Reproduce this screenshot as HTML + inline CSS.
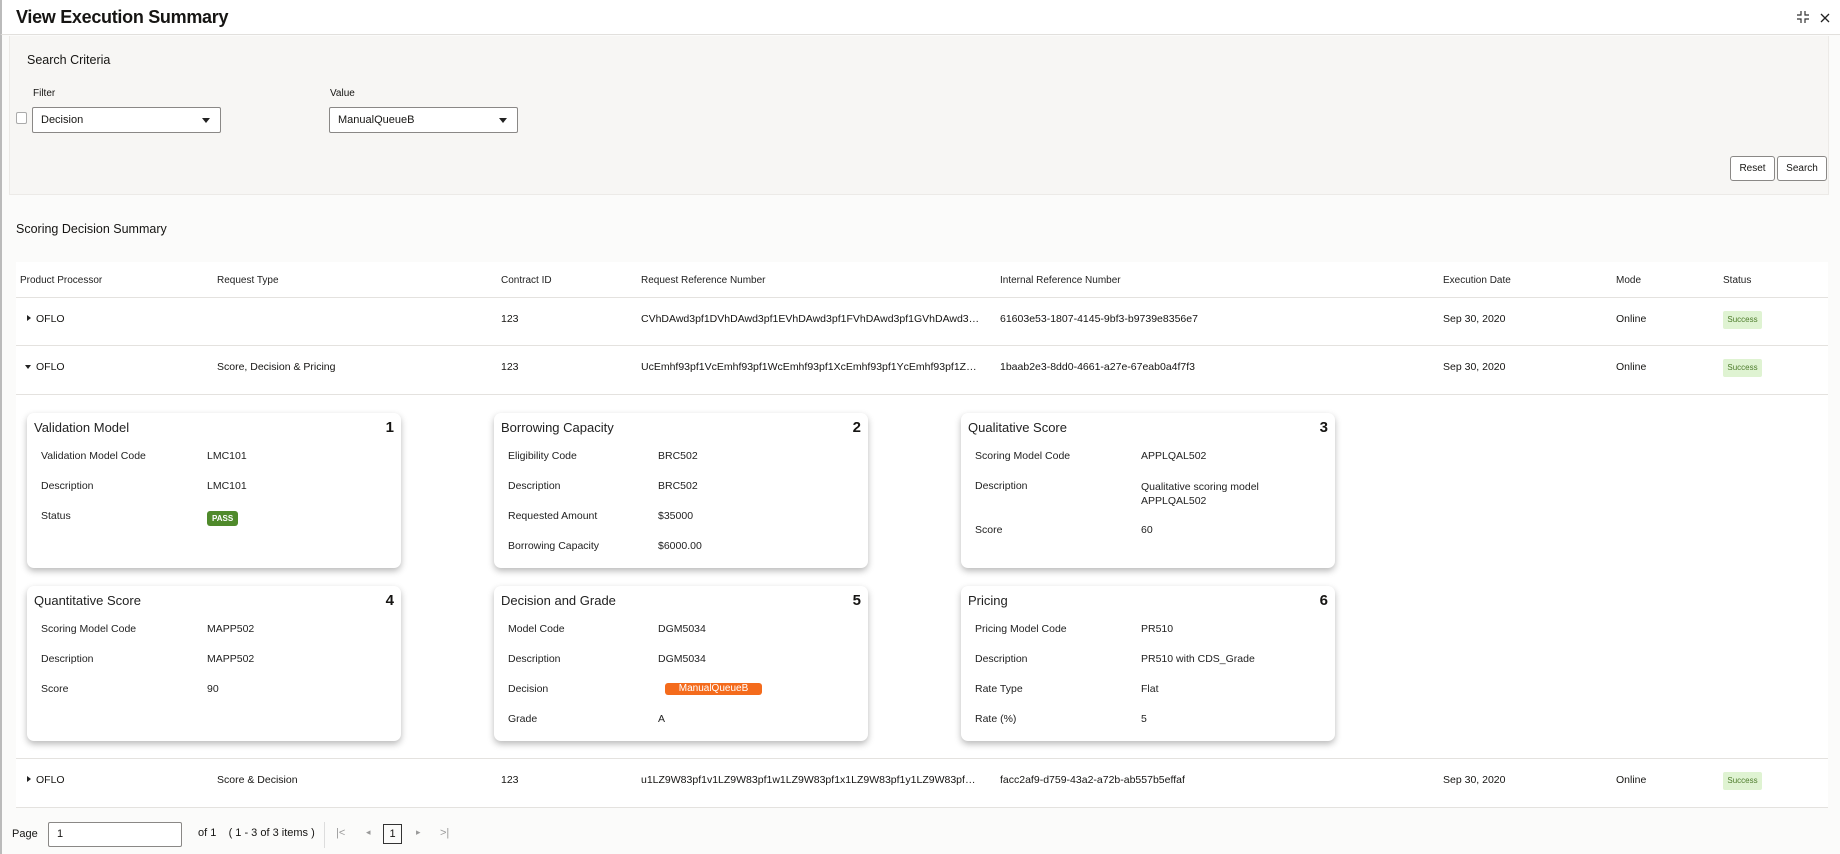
<!DOCTYPE html>
<html><head><meta charset="utf-8"><style>
*{margin:0;padding:0;box-sizing:border-box}
body{width:1840px;height:854px;overflow:hidden;background:#fff;font-family:"Liberation Sans",sans-serif;color:#161513;position:relative;font-size:11px}
.a{position:absolute;white-space:nowrap}
.hdr{left:0;top:0;width:1840px;height:35px;border-bottom:1px solid #e2e0dd;border-left:2px solid #bbb}
.bg{left:0;top:35px;width:1840px;height:819px;background:#fbfbfa;border-left:2px solid #bbb}
.panel{left:9px;top:36px;width:1820px;height:159px;background:#f7f6f4;border:1px solid #eceae7;border-top:none}
.sel{height:26px;border:1px solid #8a8886;border-radius:2px;background:#fff;font-size:11px;padding:6px 8px}
.sel:after{content:"";position:absolute;right:10px;top:10px;border-left:4px solid transparent;border-right:4px solid transparent;border-top:5px solid #222}
.btn{top:156px;height:25px;border:1px solid #8a8886;border-radius:3px;background:#fff;font-size:10px;text-align:center;line-height:23px}
.tbl{left:16px;top:262px;width:1812px;height:546px;background:#fff}
.hl{height:1px;background:#e4e2df;left:16px;width:1812px}
.th{font-size:10px;top:275px;color:#222}
.td{font-size:10.5px}
.ref{overflow:hidden;text-overflow:ellipsis;width:340px}
.ok{width:39px;height:18px;background:#dff3d2;color:#4d7c2b;font-size:8px;text-align:center;line-height:18px;border-radius:2px}
.card{width:374px;height:155px;background:#fff;border-radius:7px;box-shadow:0 3px 7px rgba(0,0,0,.28)}
.card .t{position:absolute;left:7px;top:7px;font-size:13px;color:#222}
.card .n{position:absolute;right:7px;top:6px;font-size:15px;font-weight:bold}
.card .l,.card .v{position:absolute;font-size:10.5px;color:#222;white-space:nowrap}
.card .l{left:14px}
.card .v{left:180px}
.arr{display:inline-block;width:0;height:0;margin-right:5px;vertical-align:1px}
.r{border-top:3.5px solid transparent;border-bottom:3.5px solid transparent;border-left:4px solid #222}
.d{border-left:3.5px solid transparent;border-right:3.5px solid transparent;border-top:4px solid #222}
</style></head><body>
<div class="a hdr"></div>
<div class="a" style="left:16px;top:7px;font-size:18px;font-weight:bold;letter-spacing:-0.3px">View Execution Summary</div>
<svg class="a" style="left:1796px;top:10px" width="14" height="14" viewBox="0 0 14 14" fill="none" stroke="#333" stroke-width="1.2"><path d="M5 1v4H1M9 1v4h4M5 13V9H1M9 13V9h4"/></svg>
<svg class="a" style="left:1820px;top:13px" width="10" height="10" viewBox="0 0 10 10" stroke="#222" stroke-width="1.3"><path d="M1 1l8 8M9 1L1 9"/></svg>
<div class="a bg"></div>
<div class="a panel"></div>
<div class="a" style="left:27px;top:53px;font-size:12.5px">Search Criteria</div>
<div class="a" style="left:33px;top:88px;font-size:10px">Filter</div>
<div class="a" style="left:330px;top:88px;font-size:10px">Value</div>
<div class="a" style="left:16px;top:112px;width:11px;height:12px;border:1px solid #aaa;border-radius:2px;background:#fff"></div>
<div class="a sel" style="left:32px;top:107px;width:189px">Decision</div>
<div class="a sel" style="left:329px;top:107px;width:189px">ManualQueueB</div>
<div class="a btn" style="left:1730px;width:45px">Reset</div>
<div class="a btn" style="left:1777px;width:50px">Search</div>
<div class="a" style="left:16px;top:222px;font-size:12.5px">Scoring Decision Summary</div>
<div class="a tbl"></div>
<div class="a th" style="left:20px">Product Processor</div>
<div class="a th" style="left:217px">Request Type</div>
<div class="a th" style="left:501px">Contract ID</div>
<div class="a th" style="left:641px">Request Reference Number</div>
<div class="a th" style="left:1000px">Internal Reference Number</div>
<div class="a th" style="left:1443px">Execution Date</div>
<div class="a th" style="left:1616px">Mode</div>
<div class="a th" style="left:1723px">Status</div>
<div class="a hl" style="top:297px"></div>
<div class="a td" style="left:27px;top:313px"><span class="arr r"></span>OFLO</div>
<div class="a td" style="left:501px;top:313px">123</div>
<div class="a td ref" style="left:641px;top:313px">CVhDAwd3pf1DVhDAwd3pf1EVhDAwd3pf1FVhDAwd3pf1GVhDAwd3pf1HVhDAwd3p</div>
<div class="a td" style="left:1000px;top:313px">61603e53-1807-4145-9bf3-b9739e8356e7</div>
<div class="a td" style="left:1443px;top:313px">Sep 30, 2020</div>
<div class="a td" style="left:1616px;top:313px">Online</div>
<div class="a ok" style="left:1723px;top:311px">Success</div>
<div class="a hl" style="top:345px"></div>
<div class="a td" style="left:25px;top:361px"><span class="arr d"></span>OFLO</div>
<div class="a td" style="left:217px;top:361px">Score, Decision &amp; Pricing</div>
<div class="a td" style="left:501px;top:361px">123</div>
<div class="a td ref" style="left:641px;top:361px">UcEmhf93pf1VcEmhf93pf1WcEmhf93pf1XcEmhf93pf1YcEmhf93pf1ZcEmhf93pf</div>
<div class="a td" style="left:1000px;top:361px">1baab2e3-8dd0-4661-a27e-67eab0a4f7f3</div>
<div class="a td" style="left:1443px;top:361px">Sep 30, 2020</div>
<div class="a td" style="left:1616px;top:361px">Online</div>
<div class="a ok" style="left:1723px;top:359px">Success</div>
<div class="a hl" style="top:394px"></div>

<div class="a card" style="left:27px;top:413px"><div class="t">Validation Model</div><div class="n">1</div>
<div class="l" style="top:37px">Validation Model Code</div><div class="v" style="top:37px">LMC101</div>
<div class="l" style="top:67px">Description</div><div class="v" style="top:67px">LMC101</div>
<div class="l" style="top:97px">Status</div><div class="v" style="top:98px;background:#4f8a2b;color:#fff;font-size:8px;font-weight:bold;padding:3px 5px;border-radius:3px">PASS</div></div>

<div class="a card" style="left:494px;top:413px"><div class="t">Borrowing Capacity</div><div class="n">2</div>
<div class="l" style="top:37px">Eligibility Code</div><div class="v" style="top:37px;left:164px">BRC502</div>
<div class="l" style="top:67px">Description</div><div class="v" style="top:67px;left:164px">BRC502</div>
<div class="l" style="top:97px">Requested Amount</div><div class="v" style="top:97px;left:164px">$35000</div>
<div class="l" style="top:127px">Borrowing Capacity</div><div class="v" style="top:127px;left:164px">$6000.00</div></div>

<div class="a card" style="left:961px;top:413px"><div class="t">Qualitative Score</div><div class="n">3</div>
<div class="l" style="top:37px">Scoring Model Code</div><div class="v" style="top:37px">APPLQAL502</div>
<div class="l" style="top:67px">Description</div><div class="v" style="top:67px;line-height:14px">Qualitative scoring model<br>APPLQAL502</div>
<div class="l" style="top:111px">Score</div><div class="v" style="top:111px">60</div></div>

<div class="a card" style="left:27px;top:586px"><div class="t">Quantitative Score</div><div class="n">4</div>
<div class="l" style="top:37px">Scoring Model Code</div><div class="v" style="top:37px">MAPP502</div>
<div class="l" style="top:67px">Description</div><div class="v" style="top:67px">MAPP502</div>
<div class="l" style="top:97px">Score</div><div class="v" style="top:97px">90</div></div>

<div class="a card" style="left:494px;top:586px"><div class="t">Decision and Grade</div><div class="n">5</div>
<div class="l" style="top:37px">Model Code</div><div class="v" style="top:37px;left:164px">DGM5034</div>
<div class="l" style="top:67px">Description</div><div class="v" style="top:67px;left:164px">DGM5034</div>
<div class="l" style="top:97px">Decision</div><div class="v" style="top:97px;left:171px;width:97px;height:12px;line-height:12px;background:#f46b1c;color:#fff;font-size:10px;text-align:center;border-radius:3px">ManualQueueB</div>
<div class="l" style="top:127px">Grade</div><div class="v" style="top:127px;left:164px">A</div></div>

<div class="a card" style="left:961px;top:586px"><div class="t">Pricing</div><div class="n">6</div>
<div class="l" style="top:37px">Pricing Model Code</div><div class="v" style="top:37px">PR510</div>
<div class="l" style="top:67px">Description</div><div class="v" style="top:67px">PR510 with CDS_Grade</div>
<div class="l" style="top:97px">Rate Type</div><div class="v" style="top:97px">Flat</div>
<div class="l" style="top:127px">Rate (%)</div><div class="v" style="top:127px">5</div></div>

<div class="a hl" style="top:758px"></div>
<div class="a td" style="left:27px;top:774px"><span class="arr r"></span>OFLO</div>
<div class="a td" style="left:217px;top:774px">Score &amp; Decision</div>
<div class="a td" style="left:501px;top:774px">123</div>
<div class="a td ref" style="left:641px;top:774px">u1LZ9W83pf1v1LZ9W83pf1w1LZ9W83pf1x1LZ9W83pf1y1LZ9W83pf1z1LZ9W83pf</div>
<div class="a td" style="left:1000px;top:774px">facc2af9-d759-43a2-a72b-ab557b5effaf</div>
<div class="a td" style="left:1443px;top:774px">Sep 30, 2020</div>
<div class="a td" style="left:1616px;top:774px">Online</div>
<div class="a ok" style="left:1723px;top:772px">Success</div>
<div class="a hl" style="top:807px"></div>

<div class="a" style="left:12px;top:828px;font-size:11px">Page</div>
<div class="a" style="left:48px;top:822px;width:134px;height:25px;border:1px solid #8a8886;border-radius:2px;background:#fff;font-size:11px;padding:5px 8px">1</div>
<div class="a" style="left:198px;top:827px;font-size:11px">of 1 &nbsp;&nbsp; ( 1 - 3 of 3 items )</div>
<div class="a" style="left:324px;top:822px;width:1px;height:26px;background:#ddd"></div>
<div class="a" style="left:336px;top:827px;font-size:11px;color:#999">|&lt;</div>
<div class="a" style="left:366px;top:827px;font-size:9px;color:#999">◂</div>
<div class="a" style="left:383px;top:824px;width:19px;height:20px;border:1px solid #333;font-size:11px;text-align:center;line-height:18px">1</div>
<div class="a" style="left:416px;top:827px;font-size:9px;color:#999">▸</div>
<div class="a" style="left:440px;top:827px;font-size:11px;color:#999">&gt;|</div>
</body></html>
